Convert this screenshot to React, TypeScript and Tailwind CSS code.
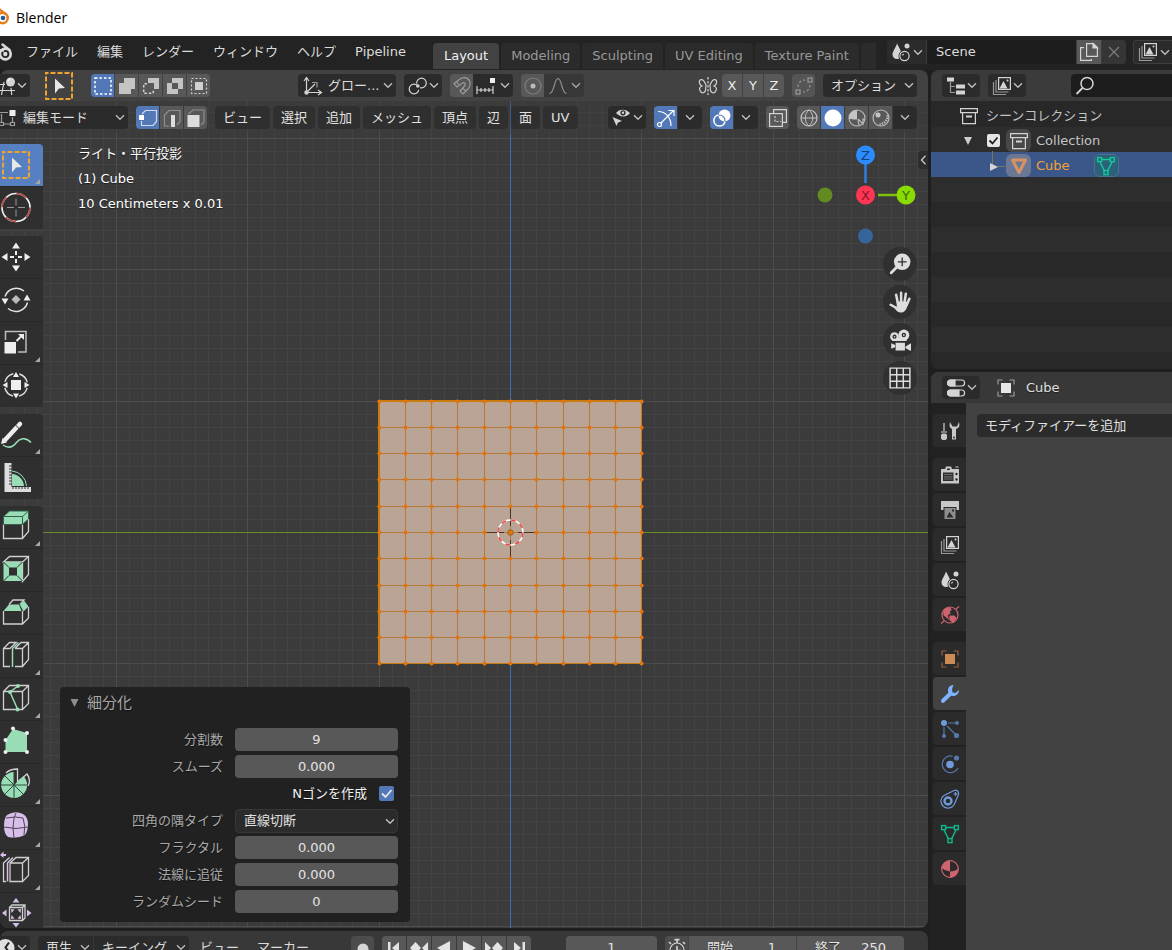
import React from "react";

type Kids = { children?: React.ReactNode };

const G = "#d4d4d4";
const GREEN = "#98ddb5";
const PURPLE = "#d6bfe8";

const DARK = "flex h-[23px] shrink-0 items-center rounded bg-[#2b2b2b] text-[#dcdcdc]";
const TOGGLE = "flex h-[23px] w-[23px] shrink-0 items-center justify-center bg-[#585858]";
const TOGGLE_ON = "flex h-[23px] w-[23px] shrink-0 items-center justify-center bg-[#5278b8]";

function Ico({ children, size = 20, color = G }: Kids & { size?: number; color?: string }) {
  return (
    <svg
      aria-hidden="true"
      className="shrink-0"
      width={size}
      height={size}
      viewBox="0 0 20 20"
      fill="none"
      stroke={color}
      strokeWidth="1.2"
      style={{ color }}
    >
      {children}
    </svg>
  );
}

function Chevron() {
  return (
    <svg aria-hidden="true" className="pointer-events-none shrink-0" width="10" height="7" viewBox="0 0 10 7" fill="none" stroke="#bdbdbd" strokeWidth="1.4">
      <path d="M1 1.2 5 5.2 9 1.2" />
    </svg>
  );
}

function IconMenu({ label, children }: Kids & { label: string }) {
  return (
    <button
      aria-label={label}
      className="flex h-[23px] w-[38px] shrink-0 items-center justify-between rounded bg-[#2b2b2b] pr-[3px] pl-1"
    >
      {children}
      <Chevron />
    </button>
  );
}

/* ---------- header icons ---------- */

const ScenesIcon = () => (
  <Ico>
    <path d="M6 1.500C8 5.500 10.500 9 10.500 12.500a4.500 4.500 0 0 1-9 0C1.500 9.500 4.500 6 6 1.500z" fill={G} stroke="none" />
    <circle cx="13.500" cy="14" r="6" fill="#2b2b2b" stroke="none" />
    <circle cx="13.500" cy="14" r="4.600" />
    <path d="M11.500 13.500a2 2 0 0 1 1.500-1.500" />
    <circle cx="16" cy="4" r="2.500" fill={G} stroke="none" />
  </Ico>
);
const LayersIcon = () => (
  <Ico>
    <path d="M1.500 6v12.500H14M4 4v12h12.500" stroke="#999" />
    <rect x="6.600" y="1.600" width="11.800" height="11.800" />
    <path d="M7.500 12.500 11.500 5l4 7.500z" fill={G} stroke="none" />
    <circle cx="15.500" cy="4.600" r="1" fill={G} stroke="none" />
  </Ico>
);
const CollectionIcon = () => (
  <Ico>
    <path d="M1.600 2.600h16.800v4H1.600zM3.600 6.600v11h12.800v-11" />
    <path d="M7 10.500h6" strokeWidth="2" />
  </Ico>
);
const ObjectIcon = ({ c = "#e6e6e6", d = "#9a9a9a" }: { c?: string; d?: string }) => (
  <Ico>
    <path d="M2 6.500V2h4.500M13.500 2H18v4.500M18 13.500V18h-4.500M6.500 18H2v-4.500" stroke={d} />
    <rect x="5" y="5" width="10" height="10" fill={c} stroke="none" />
  </Ico>
);
const MeshIcon = ({ c = "#10b88c" }: { c?: string }) => (
  <Ico color={c}>
    <path d="M5 3.500h10M4 6l4.500 9M16 6l-4.500 9" strokeWidth="1.500" />
    <rect x="1.600" y="1.600" width="4" height="4" strokeWidth="1.400" />
    <rect x="14.400" y="1.600" width="4" height="4" strokeWidth="1.400" />
    <rect x="8" y="14.600" width="4" height="4" strokeWidth="1.400" />
  </Ico>
);

const BoxSelectGlyph = ({ size }: { size: number }) => (
  <svg aria-hidden="true" width={size} height={size} viewBox="0 0 32 32" fill="none" className="shrink-0">
    <rect x="3" y="3" width="26" height="26" stroke="#f0a332" strokeWidth="2" strokeDasharray="5 2" strokeDashoffset="2.500" />
    <path d="M12 8.500 22 18l-6 .5-4 5z" fill="#e8e8e8" />
  </svg>
);

/* ---------- window chrome ---------- */

function TitleBar() {
  return (
    <header className="flex h-9 shrink-0 items-center bg-white">
      <svg aria-hidden="true" className="mr-[7px]" width="9" height="20" viewBox="0 0 9 20" fill="none">
        <circle cx="2.500" cy="10" r="5.200" fill="#fff" stroke="#e8801a" strokeWidth="2.600" />
        <path d="M-1 1 6 6.500" stroke="#e8801a" strokeWidth="2.400" />
        <circle cx="3" cy="10" r="2.300" fill="#235b9c" />
      </svg>
      <h1 className="font-['Open_Sans','Noto_Sans',sans-serif] text-[14px] text-black">Blender</h1>
    </header>
  );
}

function TopBar() {
  const menus = ["ファイル", "編集", "レンダー", "ウィンドウ", "ヘルプ", "Pipeline"];
  const tabs = ["Modeling", "Sculpting", "UV Editing", "Texture Paint"];
  return (
    <div className="flex h-[34px] shrink-0 bg-[#232323]">
      <div className="flex h-8 shrink-0 items-center">
        <svg aria-label="Blender" className="mr-[13px]" width="13" height="20" viewBox="0 0 13 20" fill="none">
          <circle cx="5.300" cy="12" r="5.400" stroke="#dcdcdc" strokeWidth="2.700" />
          <circle cx="5.300" cy="12" r="2.200" fill="#dcdcdc" />
          <path d="M-2 8.500h5M2.500 2.500 9.500 8" stroke="#dcdcdc" strokeWidth="2.400" strokeLinecap="round" />
        </svg>
        <nav className="flex items-center gap-[19px]">
          {menus.map((m) => (
            <button key={m} className="text-[#dcdcdc]">{m}</button>
          ))}
        </nav>
      </div>
      <div role="tablist" className="ml-[27px] flex min-w-0 flex-1 items-end gap-[2px] overflow-hidden pb-[1px]">
        <button role="tab" aria-selected="true" className="h-[26px] shrink-0 rounded-t bg-[#424242] px-[11px] text-[#f0f0f0]">Layout</button>
        {tabs.map((t) => (
          <button role="tab" key={t} aria-selected="false" className="h-[26px] shrink-0 rounded-t bg-[#2b2b2b] px-[10px] text-[#989898]">{t}</button>
        ))}
        <span className="h-[26px] min-w-2 flex-1 rounded-tl bg-[#2b2b2b]" />
      </div>
      <div className="ml-[11px] flex h-8 shrink-0 items-center gap-[7px]">
        <div className="flex h-[24px] gap-px overflow-hidden rounded bg-[#3d3d3d]">
          <button aria-label="シーンを参照" className="flex w-[39px] items-center justify-between bg-[#2b2b2b] pr-[3px] pl-1">
            <ScenesIcon />
            <Chevron />
          </button>
          <input aria-label="シーン名" defaultValue="Scene" className="w-[149px] bg-[#1d1d1d] px-[9px] text-[#dcdcdc] outline-none" />
          <button aria-label="新規シーン" className="flex w-6 items-center justify-center bg-[#585858]">
            <Ico>
              <path d="M7.600 1.600h6.800l4 4v8.800H7.600z" />
              <path d="M14 1.600v4.400h4.400z" fill={G} />
              <path d="M5 5.600H1.600v12.800h10.800V17" />
            </Ico>
          </button>
          <button aria-label="シーンを削除" className="flex w-6 items-center justify-center bg-[#353535]">
            <Ico color="#7c7c7c"><path d="M5 5l10 10M15 5 5 15" /></Ico>
          </button>
        </div>
        <button aria-label="ビューレイヤー" className="flex h-[24px] w-[39px] items-center justify-between rounded-l border border-r-0 border-[#3d3d3d] bg-[#2b2b2b] pr-[2px] pl-1">
          <LayersIcon />
          <Chevron />
        </button>
      </div>
    </div>
  );
}

function ToolSettings() {
  return (
    <div className="flex h-[31px] shrink-0 items-center rounded-t-lg bg-[#424242] pr-[11px]">
      <button aria-label="ツール設定" className="flex h-[23px] w-[30px] shrink-0 items-center justify-between rounded-r bg-[#2b2b2b] pr-[3px]">
        <svg aria-hidden="true" width="16" height="20" viewBox="0 0 16 20" fill="none" stroke={G} strokeWidth="1.200">
          <path d="M0 8.500h5M0 14.500h15M4 6 1.500 19M11 12l.8 7" />
          <circle cx="10.500" cy="6" r="4.500" fill={G} stroke="none" />
          <path d="M8 5a3 3 0 0 1 2-2" stroke="#fff" />
        </svg>
        <Chevron />
      </button>
      <button aria-label="ボックス選択" className="ml-[13px] shrink-0"><BoxSelectGlyph size={32} /></button>
      <div className="ml-[16px] flex shrink-0 gap-px overflow-hidden rounded">
        <button aria-label="新規選択" className={TOGGLE_ON}>
          <Ico color="#fff"><rect x="2" y="2" width="16" height="16" strokeDasharray="2.500 2" strokeWidth="1.500" /></Ico>
        </button>
        <button aria-label="選択に追加" className={TOGGLE}>
          <Ico><path d="M7 2h11v11h-4v5H2V7h5z" fill="#c4c4c4" stroke="none" /></Ico>
        </button>
        <button aria-label="選択から除外" className={TOGGLE}>
          <Ico>
            <path d="M7 2h11v11h-5V7H7z" fill="#c4c4c4" stroke="none" />
            <path d="M6 7.700H2.700v9.600h9.600V14" strokeDasharray="2.500 2" strokeWidth="1.500" />
          </Ico>
        </button>
        <button aria-label="選択を反転" className={TOGGLE}>
          <Ico><path fillRule="evenodd" d="M7 2h11v11h-5v5H2V7h5zM7 7v6h6V7z" fill="#c4c4c4" stroke="none" /></Ico>
        </button>
        <button aria-label="交差選択" className={TOGGLE}>
          <Ico>
            <rect x="6" y="6" width="8" height="8" fill="#d0d0d0" stroke="none" />
            <rect x="2.500" y="2.500" width="15" height="15" strokeDasharray="2 2" />
          </Ico>
        </button>
      </div>

      <div className="relative ml-[88px] shrink-0">
        <span className="pointer-events-none absolute top-[2px] left-[5px]">
          <Ico>
            <path d="M3.500 2v14.500H18" />
            <path d="M1 5 3.500 1.500 6 5M15 14l3.500 2.500L15 19M4 16 12 8" />
            <path d="M9 6.500h5v5" stroke="#999" />
            <circle cx="3.500" cy="16.500" r="1.600" fill={G} />
          </Ico>
        </span>
        <select aria-label="トランスフォーム座標系" className="h-[23px] w-[98px] appearance-none rounded bg-[#2b2b2b] pl-[30px] text-[#dcdcdc] outline-none">
          <option>グロー...</option>
        </select>
        <span className="pointer-events-none absolute top-[8px] right-[3px]"><Chevron /></span>
      </div>
      <div className="ml-2">
        <IconMenu label="ピボットポイント">
          <Ico>
            <circle cx="6" cy="13" r="4.800" strokeDasharray="25 5.200" strokeDashoffset="-1" />
            <circle cx="13.500" cy="7" r="4.800" strokeDasharray="25 5.200" strokeDashoffset="-14" />
            <circle cx="9.800" cy="10" r="1.800" fill={G} stroke="none" />
          </Ico>
        </IconMenu>
      </div>
      <div className="ml-2 flex shrink-0 overflow-hidden rounded">
        <button aria-label="スナップ" className={TOGGLE}>
          <Ico color="#9b9b9b">
            <path d="M2 7.500 8 3c4-3 9-1 10 3s-1 6-3 8l-4 4-3-3 4.500-5c2-2 0-4-2-3L5 11z" />
            <path d="M4.500 5.500 7 9M13.500 15l-3-3" />
          </Ico>
        </button>
        <button aria-label="スナップ先" className="flex h-[23px] w-[40px] items-center justify-between bg-[#2b2b2b] pr-[3px] pl-[3px]">
          <Ico>
            <path d="M1 10v8M1 14h16M17 10v8M5 12v4M9 12v4M13 12v4" />
            <rect x="14" y="2" width="5" height="5" fill="#eee" stroke="none" />
          </Ico>
          <Chevron />
        </button>
      </div>
      <div className="ml-2 flex shrink-0 overflow-hidden rounded">
        <button aria-label="プロポーショナル編集" className={TOGGLE}>
          <Ico color="#7e7e7e">
            <circle cx="10" cy="10" r="8" />
            <circle cx="10" cy="10" r="2.500" fill="#bbb" stroke="none" />
          </Ico>
        </button>
        <button aria-label="減衰タイプ" className="flex h-[23px] w-[40px] items-center justify-between bg-[#353535] pr-[3px] pl-[4px] opacity-80">
          <Ico color="#a8a8a8"><path d="M1.500 17.500c5 0 4.500-15 8.500-15s3.500 15 8.500 15" /></Ico>
          <Chevron />
        </button>
      </div>

      <div className="flex-1" />
      <Ico>
        <path d="M10 1v18" strokeDasharray="2.500 1.500" />
        <path d="M8 9 6.500 6C5 3 2 3 1.500 5S2 9 4 10c-3 1-3 4-1 6s4 0 4.500-1.500zM12 9l1.500-3c1.500-3 4.500-3 5-1s-.5 4-2.500 5c3 1 3 4 1 6s-4 0-4.500-1.500z" />
      </Ico>
      <div className="ml-[4px] flex shrink-0 gap-px overflow-hidden rounded">
        {["X", "Y", "Z"].map((a) => (
          <button key={a} className="h-[23px] w-5 bg-[#585858] text-center text-[#ececec]">{a}</button>
        ))}
      </div>
      <button aria-label="自動マージ" className="ml-2 flex h-[23px] w-[23px] shrink-0 items-center justify-center rounded bg-[#555]">
        <Ico color="#9a9a9a">
          <rect x="2" y="14" width="4" height="4" />
          <rect x="14" y="2" width="4" height="4" />
          <path d="M4 11c0-4 3-7 7-7M16 9c0 4-3 7-7 7" strokeDasharray="2.500 2" />
        </Ico>
      </button>
      <button className="ml-2 flex h-[23px] w-[94px] shrink-0 items-center justify-between rounded bg-[#2b2b2b] pr-[3px] pl-2 text-[#dcdcdc]">
        オプション
        <Chevron />
      </button>
    </div>
  );
}

function ViewHeader() {
  const menus = ["ビュー", "選択", "追加", "メッシュ", "頂点", "辺", "面", "UV"];
  return (
    <div className="relative flex h-[33px] shrink-0 items-center bg-[#3d3d3d]/40 pr-[11px]">
      <div className="relative shrink-0">
        <svg aria-hidden="true" className="pointer-events-none absolute top-[3px] left-0" width="17" height="18" viewBox="0 0 17 18" fill="none" stroke="#9d9d9d" strokeWidth="1.200">
          <path d="M0 3.500h8M1.500 5v8M4 15h6M12.500 8v5" />
          <path d="M-.5 13.500h4v3h-4zM10.500 13.500h4v3h-4z" />
          <rect x="9.500" y="1" width="6" height="6" fill="#eee" stroke="none" />
        </svg>
        <select aria-label="モード" className="h-[23px] w-[128px] appearance-none rounded-r bg-[#2b2b2b] pl-[23px] text-[#dcdcdc] outline-none">
          <option>編集モード</option>
        </select>
        <span className="pointer-events-none absolute top-[8px] right-[3px]"><Chevron /></span>
      </div>
      <div className="ml-2 flex shrink-0 gap-px overflow-hidden rounded">
        <button aria-label="頂点選択" className={TOGGLE_ON}>
          <Ico color="#fff">
            <path d="M4 6 7.500 2.500h11v11L15 17.500H3.500V13" stroke="#cfdaf0" />
            <rect x="1" y="7" width="5" height="5" fill="#fff" stroke="none" />
          </Ico>
        </button>
        <button aria-label="辺選択" className={TOGGLE}>
          <Ico color="#8f8f8f">
            <path d="M7 18H2.500V7L7 2.500h11v11L15 17" />
            <rect x="9" y="7" width="4" height="12" fill="#ddd" stroke="none" />
          </Ico>
        </button>
        <button aria-label="面選択" className={TOGGLE}>
          <Ico color="#8f8f8f">
            <path d="M2.500 6 7 2h11v12l-3 3" />
            <rect x="1.500" y="7" width="12" height="12" fill="#ddd" stroke="none" />
          </Ico>
        </button>
      </div>
      <nav className="ml-2 flex shrink-0 gap-[3px]">
        {menus.map((m) => (
          <button key={m} className="h-[23px] rounded bg-[#2f2f2f]/90 px-2 text-[#e2e2e2]">{m}</button>
        ))}
      </nav>
      <div className="flex-1" />
      <div className="flex shrink-0 items-center gap-2">
        <IconMenu label="表示の種類">
          <Ico>
            <path d="M4 5c3-4.500 10-4.500 14 0-3 4.500-10 4.500-14 0z" fill={G} stroke="none" />
            <circle cx="11" cy="4.800" r="2.600" fill="#2b2b2b" stroke="none" />
            <circle cx="11" cy="4.800" r="1.200" fill={G} stroke="none" />
            <path d="M.5 9 10 13l-4 1.500L4.500 18z" fill={G} stroke="none" />
          </Ico>
        </IconMenu>
        <div className="flex gap-px overflow-hidden rounded">
          <button aria-label="ギズモ" className={TOGGLE_ON}>
            <Ico color="#fff">
              <path d="M2 3.500c8 0 13 6 13 14.500M4.500 15.500 17.500 2.500M12.500 2.500h5.500v5.500" />
              <circle cx="3.500" cy="16.500" r="2" />
            </Ico>
          </button>
          <button aria-label="ギズモ設定" className={DARK + " w-6 justify-center rounded-l-none"}><Chevron /></button>
        </div>
        <div className="flex gap-px overflow-hidden rounded">
          <button aria-label="オーバーレイ" className={TOGGLE_ON}>
            <Ico color="#fff">
              <circle cx="12.500" cy="7.500" r="6" fill="#fff" stroke="none" />
              <circle cx="7.500" cy="12.500" r="5.500" stroke="#5278b8" />
              <path d="M6.500 7a5.600 5.600 0 1 0 6.500 6.500" strokeWidth="1.500" />
            </Ico>
          </button>
          <button aria-label="オーバーレイ設定" className={DARK + " w-6 justify-center rounded-l-none"}><Chevron /></button>
        </div>
        <button aria-label="透過表示" className="flex h-[23px] w-[23px] items-center justify-center rounded bg-[#585858]">
          <Ico>
            <rect x="1.600" y="5.600" width="12.800" height="12.800" />
            <path d="M5.600 5V1.600h12.800v12.800H15" />
            <path d="M7 8v5.500h6" strokeDasharray="2 1.500" />
          </Ico>
        </button>
        <div className="flex gap-px overflow-hidden rounded">
          <button aria-label="ワイヤーフレーム" className={TOGGLE}>
            <Ico color="#c4c4c4">
              <circle cx="10" cy="10" r="8" />
              <path d="M2 10h16M10 2c-5 4-5 12 0 16M10 2c5 4 5 12 0 16" strokeWidth="1" />
            </Ico>
          </button>
          <button aria-label="ソリッド" className={TOGGLE_ON}>
            <Ico><circle cx="10" cy="10" r="8.500" fill="#fff" stroke="none" /></Ico>
          </button>
          <button aria-label="マテリアルプレビュー" className={TOGGLE}>
            <Ico color="#b8b8b8">
              <circle cx="10" cy="10" r="8" />
              <path d="M10 10.500V2a8 8 0 0 0-7.800 8.500zM10 2a8 8 0 0 0-8 8c0 1 3 1.500 8 1.500z" fill="#c4c4c4" stroke="none" />
              <path d="M11 11l5 5v-5l1.500 1M11 11.500l1 6" />
            </Ico>
          </button>
          <button aria-label="レンダー表示" className={TOGGLE}>
            <Ico color="#b8b8b8">
              <circle cx="10" cy="10" r="8" />
              <circle cx="7" cy="7" r="2.500" fill="#c4c4c4" stroke="none" />
              <path d="M16.500 7c1 4-3 9-8 9.500" strokeWidth="2.400" strokeDasharray="1.500 1" />
            </Ico>
          </button>
          <button aria-label="シェーディング設定" className={DARK + " w-6 justify-center rounded-l-none"}><Chevron /></button>
        </div>
      </div>
    </div>
  );
}

/* ---------- viewport drawing ---------- */

function Scene() {
  const cell = 13.13;
  const lines = Array.from({ length: 161 }, (_, i) => i - 80);
  const ticks = Array.from({ length: 11 }, (_, i) => Math.round((i - 5) * cell * 2));
  const edge = ticks[10];
  return (
    <svg aria-label="3Dビュー" className="absolute inset-0 size-full" shapeRendering="crispEdges">
      <g transform="translate(510.5 431.5)" fill="none">
        {[false, true].map((major) =>
          lines
            .filter((i) => (i % 10 === 0) === major)
            .map((i) => {
              const p = Math.round(i * cell);
              return <path key={i} d={`M${p} -1100V1100M-1100 ${p}H1100`} stroke={major ? "#4d4d4d" : "#434343"} />;
            })
        )}
        <path d="M-1100 0H1500" stroke="#658f28" />
        <path d="M0 -1100V1100" stroke="#3c70ac" />
        <rect x={-edge} y={-edge} width={edge * 2} height={edge * 2} fill="#b9a495" />
        {ticks.map((t) => (
          <path key={t} d={`M${t} ${-edge}V${edge}M${-edge} ${t}H${edge}`} stroke="#b57a3e" />
        ))}
        <rect x={-edge} y={-edge} width={edge * 2} height={edge * 2} stroke="#c97a14" />
        <path d={`M${-edge - 0.5} ${edge}V${-edge - 0.5}H${edge}`} stroke="#cc790e" strokeWidth="2" />
        <path d="M-25 0h18M7 0h19M0 -25v18M0 7v19" stroke="#4a3420" />
        <g shapeRendering="auto">
          {ticks.map((x) => ticks.map((y) => <circle key={`${x},${y}`} cx={x} cy={y} r="2.100" fill="#e4740e" />))}
          <circle r="12.500" stroke="#fff" strokeWidth="1.500" />
          <circle r="12.500" stroke="#f04444" strokeWidth="1.500" strokeDasharray="4.900 4.900" />
          <circle r="2.800" fill="#d9780f" stroke="#8f5a20" strokeWidth=".8" />
        </g>
      </g>
    </svg>
  );
}

function AxisGizmo() {
  return (
    <svg aria-label="ナビゲーション軸" width="100" height="104" viewBox="0 0 100 104" className="shrink-0" fontSize="13" textAnchor="middle">
      <path d="M49.500 19v20" stroke="#2e7fe0" strokeWidth="2.500" />
      <path d="M62 51h20" stroke="#7ec30a" strokeWidth="2.500" />
      <circle cx="9" cy="51" r="7.500" fill="#628b20" />
      <circle cx="49.500" cy="92" r="7.500" fill="#35659b" />
      <circle cx="49.500" cy="11" r="9.500" fill="#2b8cff" />
      <circle cx="49.500" cy="51" r="9.500" fill="#ff3653" />
      <circle cx="90" cy="51" r="9.500" fill="#8adb00" />
      <g className="[text-shadow:none]">
        <text x="49.500" y="16" fill="#173f73">Z</text>
        <text x="49.500" y="56" fill="#8a1527">X</text>
        <text x="90" y="56" fill="#3f6303">Y</text>
      </g>
    </svg>
  );
}

function NavButtons() {
  const cls = "flex size-[34px] items-center justify-center rounded-full bg-[#303030]";
  return (
    <div className="flex flex-col gap-1">
      <button aria-label="ズーム" className={cls}>
        <Ico size={22}>
          <circle cx="12" cy="8" r="7.500" fill="#dedede" stroke="none" />
          <path d="M7 13 2 18" stroke="#dedede" strokeWidth="2.600" strokeLinecap="round" />
          <path d="M12 4v8M8 8h8" stroke="#303030" />
        </Ico>
      </button>
      <button aria-label="視点を移動" className={cls}>
        <Ico size={22} color="#dedede">
          <path d="M6.500 3.500 8 11M11 1.500V10M15.300 2.500 14 11M18.500 7 16 13M1.500 12.500 6 15" strokeWidth="2.300" strokeLinecap="round" />
          <path d="M7 9.500h9l1 2c-.5 5-3 8-6 8s-5-2-7-5.500l3 .5z" fill="#dedede" stroke="none" />
        </Ico>
      </button>
      <button aria-label="カメラビュー" className={cls}>
        <Ico size={22} color="#dedede">
          <circle cx="13.500" cy="5.500" r="5" fill="#dedede" stroke="none" />
          <circle cx="5" cy="7" r="4" fill="#dedede" stroke="none" />
          <path d="M2 8h14v3H3z" fill="#dedede" stroke="none" />
          <circle cx="13.500" cy="5.500" r="1.400" stroke="#303030" />
          <circle cx="5" cy="7" r="1.300" stroke="#303030" />
          <path d="M6 12.500h8.500v7H6zM15 16l5-3v7l-5-2.500zM2 13l3.500 1.500v2L2 18z" fill="#dedede" stroke="none" />
        </Ico>
      </button>
      <button aria-label="透視投影" className={cls}>
        <Ico size={22} color="#dedede">
          <path d="M1 1h18v18H1zM7 1v18M13 1v18M1 7h18M1 13h18" strokeWidth="1.300" />
        </Ico>
      </button>
    </div>
  );
}

/* ---------- toolbar ---------- */

const W = "#d0d0d0";

type Tool = { name: string; more?: boolean; art: React.ReactNode };

const toolGroups: Tool[][] = [
  [
    { name: "ボックス選択", more: true, art: null },
    {
      name: "カーソル",
      art: (
        <>
          <circle cx="16" cy="15.500" r="14" stroke="#eee" strokeWidth="1.700" />
          <circle cx="16" cy="15.500" r="14" stroke="#b04a4a" strokeWidth="1.700" strokeDasharray="11 11" />
          <path d="M7 15.500h7M18 15.500h7M16 6.500v7M16 17.500v7" stroke="#999" />
        </>
      ),
    },
  ],
  [
    {
      name: "移動",
      art: (
        <>
          <path d="M16 1.500 20 7.500h-8zM16 30.500 20 24.500h-8zM1.500 16 7.500 12v8zM30.500 16 24.500 12v8z" fill="#eee" />
          <path d="M10 16h4M18 16h4M16 10v4M16 18v4" stroke="#eee" strokeWidth="2" />
        </>
      ),
    },
    {
      name: "回転",
      art: (
        <>
          <path d="M5 12.500A12 12 0 0 1 24 7M27.500 18.500A12 12 0 0 1 8 24.500" stroke="#e4e4e4" strokeWidth="1.500" />
          <path d="M1.500 14.500h7L5 20.500zM23.500 16.500h7L27 10.500z" fill="#eee" />
          <path d="M16 11 20.500 15.500 16 20 11.500 15.500z" fill="#bbb" />
        </>
      ),
    },
    {
      name: "スケール",
      more: true,
      art: (
        <>
          <path d="M5.500 13V4.500h20.500V25H18" stroke="#bdbdbd" strokeWidth="1.500" />
          <path d="M4.500 15h11.500v11.500H4.500z" fill="#eee" />
          <path d="M16.500 14 21 9.500" stroke="#eee" strokeWidth="2" />
          <path d="M18 7h6v6z" fill="#eee" />
        </>
      ),
    },
    {
      name: "トランスフォーム",
      art: (
        <>
          <circle cx="16" cy="15" r="11.500" stroke="#ddd" strokeWidth="1.500" strokeDasharray="12 6.060" strokeDashoffset="-3" />
          <path d="M16 2 19 7h-6zM16 28.500 19 23.500h-6zM2.500 15 7.500 12v6zM29.500 15 24.500 12v6zM11 10h10v10H11z" fill="#eee" />
        </>
      ),
    },
  ],
  [
    {
      name: "アノテート",
      more: true,
      art: (
        <>
          <path d="M4.500 21.500 18 7" stroke="#eee" strokeWidth="4.500" />
          <path d="M18.500 6.500 20 5" stroke="#eee" strokeWidth="4.500" strokeLinecap="round" />
          <path d="M1 25 2.500 19l4.500 4.500z" fill="#eee" />
          <path d="M15.500 6 19.500 10" stroke="#2f2f2f" />
          <path d="M3 26c6 4 10 2 13-2s9-7 15-.5" stroke={GREEN} strokeWidth="1.500" />
        </>
      ),
    },
    {
      name: "メジャー",
      art: (
        <>
          <path d="M12 24V12a13 13 0 0 1 12 12z" fill={GREEN} />
          <path d="M12 9a16 16 0 0 1 14.500 15" stroke={GREEN} />
          <path d="M4.500 1h7v29h-7zM4.500 25H31v5H4.500z" fill="#ddd" />
          <path d="M9 4h3M9 7h3M9 10h3M9 13h3M9 16h3M9 19h3M9 22h3M13 25v2M16 25v2M19 25v2M22 25v2M25 25v2M28 25v2" stroke="#333" />
        </>
      ),
    },
  ],
  [
    {
      name: "押し出し",
      more: true,
      art: (
        <>
          <path d="M3.500 13v14.500h19V13M22.500 27.500l6-7V8" stroke={W} strokeWidth="1.300" />
          <path d="M3.500 5.500 9.500 0h19v8l-6 5.500h-19z" fill={GREEN} stroke="#33604a" />
          <path d="M3.500 5.500h19v8M22.500 5.500l6-5.500" stroke="#33604a" />
        </>
      ),
    },
    {
      name: "面を差し込む",
      art: (
        <>
          <path d="M3.500 8 9.500 2.500h19v18l-6 7V8z" stroke={W} strokeWidth="1.300" />
          <path d="M22.500 8l6-5.500" stroke={W} strokeWidth="1.300" />
          <path d="M3.500 8h19v19h-19z" fill={GREEN} />
          <path d="M3.500 8 9 13.500M22.500 8 17 13.500M3.500 27 9 21.500M22.500 27 17 21.500" stroke="#2f2f2f" />
          <path d="M9 13.500h8v8H9z" fill="#2f2f2f" />
        </>
      ),
    },
    {
      name: "ベベル",
      art: (
        <>
          <path d="M3.500 14v13h19V14M22.500 27l6-6V10M9 7.500l4-4.500h11L20 7.500" stroke={W} strokeWidth="1.300" />
          <path d="M3.500 14 9 7.500h10l2.500 6.500z" fill={GREEN} />
          <path d="M20 8l4-4.500 4.500 6-5 5z" fill={GREEN} />
        </>
      ),
    },
    {
      name: "ループカット",
      more: true,
      art: (
        <>
          <path d="M10 8.500H3.500v18H10M15 8.500h7.500v18H15M22.500 26.500l6-7V2.500H21l-6 6M3.500 8.500l6-6H16l-6 6M22.500 8.500l6-6" stroke={W} strokeWidth="1.300" />
          <path d="M12.500 27V8.500l6-6" stroke={GREEN} strokeWidth="1.500" />
        </>
      ),
    },
    {
      name: "ナイフ",
      more: true,
      art: (
        <>
          <path d="M3.500 8.500h19v18h-19zM3.500 8.500l6-6h19v18l-6 6M22.500 8.500l6-6" stroke={W} strokeWidth="1.300" />
          <path d="M18 3 10 9l7.500 17" stroke={GREEN} strokeWidth="1.500" />
          <path d="M18 1a2 2 0 1 1 0 4 2 2 0 0 1 0-4zM10 7a2 2 0 1 1 0 4 2 2 0 0 1 0-4zM17.500 24.500a2 2 0 1 1 0 4 2 2 0 0 1 0-4z" fill={GREEN} />
        </>
      ),
    },
    {
      name: "ポリビルド",
      art: (
        <>
          <path d="M13 3 27 7v19H5.500V14z" fill={GREEN} />
          {[[13, 2.5], [27, 7], [5.5, 14], [5.5, 26], [27, 26]].map(([x, y]) => (
            <circle key={`${x}-${y}`} cx={x} cy={y} r="2" fill="#eee" />
          ))}
        </>
      ),
    },
    {
      name: "スピン",
      more: true,
      art: (
        <>
          <path d="M6 4c3-3 7-4 11.500-4v13L27 5c3 4 3 9 1 12" stroke={W} strokeWidth="1.300" />
          <path d="M14 16V3a13 13 0 1 0 9.500 4z" fill={GREEN} />
          <path d="M1 16h26M14 3v26M5 7l18 18M5 25l9.500-9.500" stroke="#2f4a3b" />
        </>
      ),
    },
    {
      name: "スムーズ",
      more: true,
      art: (
        <>
          <path d="M7 3q8-5 16-1 5 3 5 10t-3 11q-8 4-17 2-4-3-4-11T7 3z" fill={PURPLE} />
          <path d="M4 15q12 3 24 0M14 26q-2-10 0-20M6 6q10-2 17 0M14 6l2-5M23 6q3 8 1 17" stroke="#4e4458" />
        </>
      ),
    },
    {
      name: "辺スライド",
      more: true,
      art: (
        <>
          <path d="M6 26.500H3.500V8l6-5.500M10 8h12.500v18.500H10zM10 8l6-5.500h12.500v18l-6 6M22.500 8l6-5.500" stroke={W} strokeWidth="1.300" />
          <path d="M7.500 26.500V8L13 2.500" stroke={PURPLE} strokeWidth="1.500" />
          <path d="M6-1H3.500V-3.500L0 0 3.500 3V1H6z" fill={PURPLE} />
        </>
      ),
    },
    {
      name: "収縮/膨張",
      more: true,
      art: (
        <>
          <path d="M9.500 9.500h13v13h-13zM9.500 9.500 12 7h13v13l-2.500 2.500M22.500 9.500 25 7" stroke={W} strokeWidth="1.300" />
          <path d="M11 11l3.500.5L11.500 15zM21 11l-3.500.5L20.500 15zM11 21l3.500-.5L11.500 17zM21 21l-3.500-.5L20.500 17zM16 0l3.500 4.500h-7zM16 29.500l3.500-4.500h-7zM2 15l4.500-3.500v7zM31.500 15 27 11.500v7z" fill={PURPLE} />
        </>
      ),
    },
  ],
];

function Toolbar() {
  return (
    <div className="mt-[10px] flex w-[43px] shrink-0 flex-col gap-[7px] overflow-hidden">
      {toolGroups.map((group, g) => (
        <div key={g} className="flex shrink-0 flex-col gap-px overflow-hidden rounded-r bg-[#282828]">
          {group.map((t) => (
            <button
              key={t.name}
              aria-label={t.name}
              className={"relative flex h-[42px] items-center " + (t.art ? "bg-[#2f2f2f]" : "bg-[#5680c2]")}
            >
              {t.art ? (
                <svg aria-hidden="true" width="32" height="32" viewBox="0 0 32 32" fill="none" overflow="visible">{t.art}</svg>
              ) : (
                <BoxSelectGlyph size={32} />
              )}
              {t.more && (
                <svg aria-hidden="true" className="absolute right-[3px] bottom-[2px]" width="5" height="5" viewBox="0 0 5 5">
                  <path d="M5 0v5H0z" fill="#a8a8a8" />
                </svg>
              )}
            </button>
          ))}
        </div>
      ))}
    </div>
  );
}

/* ---------- operator panel ---------- */

function NumberRow({ label, id, value }: { label: string; id: string; value: string }) {
  return (
    <div className="flex h-[23px] items-center gap-3">
      <label htmlFor={id} className="flex-1 text-right text-[#a9a9a9]">{label}</label>
      <input id={id} defaultValue={value} className="h-[23px] w-[163px] rounded bg-[#585858] text-center text-[#e4e4e4] outline-none" />
    </div>
  );
}

function OperatorPanel() {
  return (
    <section className="absolute bottom-[6px] left-[60px] w-[350px] rounded bg-[#212121] pr-3 pb-[9px] pl-[10px]">
      <h2 className="flex h-8 items-center gap-2 text-[15px] text-[#a9a9a9]">
        <svg aria-hidden="true" width="9" height="8" viewBox="0 0 9 8"><path d="M.5 0h8L4.500 8z" fill="#8d8d8d" /></svg>
        細分化
      </h2>
      <div className="mt-[9px] flex flex-col gap-1">
        <NumberRow id="cuts" label="分割数" value="9" />
        <NumberRow id="smooth" label="スムーズ" value="0.000" />
        <div className="flex h-[23px] items-center justify-end gap-3 pr-1">
          <label htmlFor="ngon" className="text-[#f2f2f2]">Nゴンを作成</label>
          <span className="relative flex size-[15px]">
            <input id="ngon" type="checkbox" defaultChecked className="size-[15px] appearance-none rounded-xs bg-[#5278b8]" />
            <svg aria-hidden="true" className="pointer-events-none absolute inset-0" width="15" height="15" viewBox="0 0 15 15" fill="none">
              <path d="M3 7.500 6.500 11 12.500 4" stroke="#e8e8e8" strokeWidth="1.800" />
            </svg>
          </span>
        </div>
        <div className="flex h-[23px] items-center gap-3">
          <label htmlFor="corner" className="flex-1 text-right text-[#a9a9a9]">四角の隅タイプ</label>
          <span className="relative flex">
            <select id="corner" className="h-[24px] w-[163px] appearance-none rounded border border-[#383838] bg-[#2b2b2b] pl-2 text-[#e0e0e0] outline-none">
              <option>直線切断</option>
            </select>
            <span className="pointer-events-none absolute top-[9px] right-[3px]"><Chevron /></span>
          </span>
        </div>
        <NumberRow id="fractal" label="フラクタル" value="0.000" />
        <NumberRow id="along" label="法線に追従" value="0.000" />
        <NumberRow id="seed" label="ランダムシード" value="0" />
      </div>
    </section>
  );
}

function Viewport() {
  return (
    <main className="relative flex min-h-0 flex-1 flex-col overflow-hidden rounded-b-lg bg-[#3b3b3b]">
      <Scene />
      <ViewHeader />
      <div className="relative flex min-h-0 flex-1">
        <Toolbar />
        <div className="mt-[7px] ml-[35px] leading-[25px] text-white">
          <p>ライト・平行投影</p>
          <p>(1) Cube</p>
          <p>10 Centimeters x 0.01</p>
        </div>
        <div className="mt-[10px] ml-auto flex flex-col items-end">
          <div className="flex">
            <AxisGizmo />
            <button aria-label="サイドバーを開く" className="mt-[7px] ml-[2px] flex h-[18px] w-[10px] items-center justify-center rounded-l bg-[#2d2d2d]">
              <svg aria-hidden="true" width="7" height="10" viewBox="0 0 7 10" fill="none" stroke="#c8c8c8" strokeWidth="1.300"><path d="M5.500.8 1.500 5l4 4.200" /></svg>
            </button>
          </div>
          <div className="mr-[11px] -mt-px"><NavButtons /></div>
        </div>
        <OperatorPanel />
      </div>
    </main>
  );
}

/* ---------- timeline ---------- */

function Timeline() {
  const play = "flex h-[23px] w-6 items-center justify-center bg-[#585858]";
  return (
    <footer className="mt-[3px] flex h-[19px] shrink-0 items-start overflow-hidden rounded-t-lg bg-[#383838] pt-[5px] pr-6">
      <button aria-label="エディタータイプ" className="flex h-[23px] w-[30px] shrink-0 items-center justify-between rounded-tr bg-[#2b2b2b] pr-[3px]">
        <svg aria-hidden="true" width="16" height="20" viewBox="0 0 16 20">
          <circle cx="5.500" cy="10" r="9" fill="#e0e0e0" />
          <path d="M9 4.500 5.500 9.500 9 14" stroke="#222" strokeWidth="2" fill="none" />
        </svg>
        <Chevron />
      </button>
      <div className="ml-2 flex shrink-0 gap-px text-[#dcdcdc]">
        <button className="flex h-[23px] w-[55px] items-center justify-between rounded-tl bg-[#2b2b2b] pr-[3px] pl-2">再生<Chevron /></button>
        <button className="flex h-[23px] w-[95px] items-center justify-between rounded-tr bg-[#2b2b2b] pr-[3px] pl-2">キーイング<Chevron /></button>
      </div>
      <button className="ml-[11px] h-[23px] shrink-0 text-[#dcdcdc]">ビュー</button>
      <button className="ml-[18px] h-[23px] shrink-0 text-[#dcdcdc]">マーカー</button>
      <button aria-label="自動キー挿入" className="ml-[42px] flex h-[23px] w-[23px] shrink-0 items-center justify-center rounded-t bg-[#4c4c4c]">
        <Ico><circle cx="10" cy="11" r="5.500" fill="#d6d6d6" stroke="none" /></Ico>
      </button>
      <div className="ml-2 flex shrink-0 gap-px overflow-hidden rounded-t bg-[#3a3a3a]">
        <button aria-label="先頭へ" className={play}><Ico><path d="M4 4h2.500v12H4zM15 4v12l-7-6z" fill="#e4e4e4" stroke="none" /></Ico></button>
        <button aria-label="前のキーへ" className={play}><Ico><path d="M1 10l5.500-6 5.500 6-5.500 6zM19 4v12l-6-6z" fill="#e4e4e4" stroke="none" /></Ico></button>
        <button aria-label="逆再生" className={play}><Ico><path d="M16 3v14L3 10z" fill="#e4e4e4" stroke="none" /></Ico></button>
        <button aria-label="アニメーション再生" className={play}><Ico><path d="M4 3v14l13-7z" fill="#e4e4e4" stroke="none" /></Ico></button>
        <button aria-label="次のキーへ" className={play}><Ico><path d="M19 10l-5.500-6L8 10l5.500 6zM1 4v12l6-6z" fill="#e4e4e4" stroke="none" /></Ico></button>
        <button aria-label="最後へ" className={play}><Ico><path d="M13.500 4H16v12h-2.500zM5 4v12l7-6z" fill="#e4e4e4" stroke="none" /></Ico></button>
      </div>
      <div className="flex-1" />
      <input aria-label="現在のフレーム" defaultValue="1" className="h-[23px] w-[91px] shrink-0 rounded-t bg-[#585858] text-center text-[#e4e4e4] outline-none" />
      <div className="ml-2 flex h-[23px] shrink-0 gap-px overflow-hidden rounded-t bg-[#444] text-[#e4e4e4]">
        <button aria-label="プレビュー範囲" className="flex w-[23px] items-center justify-center bg-[#4c4c4c]">
          <Ico><circle cx="10" cy="12" r="7" /><path d="M7.500 1.600h5M10 2v3M10 8v4.500h4M2 4l2 2M16 4l2 2" strokeWidth="1.600" /></Ico>
        </button>
        <div className="flex w-[107px] items-center bg-[#585858] pr-5 pl-[18px]">
          <label htmlFor="start" className="shrink-0">開始</label>
          <input id="start" defaultValue="1" className="w-full min-w-0 bg-transparent text-right outline-none" />
        </div>
        <div className="flex w-[107px] items-center bg-[#585858] pr-[18px] pl-[18px]">
          <label htmlFor="end" className="shrink-0">終了</label>
          <input id="end" defaultValue="250" className="w-full min-w-0 bg-transparent text-right outline-none" />
        </div>
      </div>
    </footer>
  );
}

/* ---------- right side ---------- */

function Outliner() {
  const row = "flex h-[25px] shrink-0 items-center pt-[2px] odd:bg-[#282828] even:bg-[#2d2d2d]";
  return (
    <section className="flex h-[299px] shrink-0 flex-col overflow-hidden rounded-l-lg bg-[#282828]">
      <div className="flex h-[31px] shrink-0 items-center bg-[#3b3b3b] pl-[11px]">
        <IconMenu label="アウトライナー">
          <Ico>
            <path d="M1 1.500h7v4H1zM10 8.500h9v4h-9zM10 14.500h9v4h-9z" fill={G} stroke="none" />
            <path d="M4.500 5.500v11H9M4.500 10.500H9" stroke="#999" />
          </Ico>
        </IconMenu>
        <div className="ml-2"><IconMenu label="表示モード"><LayersIcon /></IconMenu></div>
        <label className="ml-[45px] flex h-[23px] min-w-0 flex-1 items-center rounded-l bg-[#1d1d1d] pl-1">
          <Ico><circle cx="12" cy="7.500" r="6" strokeWidth="1.500" /><path d="M7.500 12 1.500 18" strokeWidth="1.800" /></Ico>
          <input aria-label="検索" className="min-w-0 flex-1 bg-transparent outline-none" />
        </label>
      </div>
      <ul className="flex flex-col pt-px text-[#c4c4c4] [text-shadow:none]">
        <li className={row + " gap-[7px] pl-[28px]"}><CollectionIcon />シーンコレクション</li>
        <li className={row + " pl-[33px]"}>
          <svg aria-hidden="true" width="8" height="8" viewBox="0 0 8 8"><path d="M0 0h8L4 8z" fill="#ccc" /></svg>
          <span className="relative ml-[15px] flex size-[13px]">
            <input id="collection" type="checkbox" defaultChecked className="size-[13px] appearance-none rounded-xs bg-[#e4e4e4]" />
            <svg aria-hidden="true" className="pointer-events-none absolute inset-0" width="13" height="13" viewBox="0 0 13 13" fill="none">
              <path d="M2.500 6.500 5.500 9.500l5-6" stroke="#222" strokeWidth="1.800" />
            </svg>
          </span>
          <span className="ml-[6px] flex h-[23px] w-[25px] items-center justify-center rounded-md bg-[#484848]"><CollectionIcon /></span>
          <label htmlFor="collection" className="ml-[5px]">Collection</label>
        </li>
        <li className="flex h-[25px] shrink-0 items-center bg-[#3b5689] pt-[2px] pl-[58px] text-[#f2a235]">
          <svg aria-hidden="true" className="-mt-[10px]" width="17" height="20" viewBox="0 0 17 20" fill="none">
            <path d="M3.500 0v16M8 15.500h9" stroke="#7a7560" />
            <path d="M1 12l8 4-8 4z" fill="#d4d4d4" />
          </svg>
          <span className="flex h-[23px] w-[25px] items-center justify-center rounded-md bg-[#6a7896]">
            <Ico color="#d89263"><path d="M3.500 4h13L10 16.500z" strokeWidth="3" strokeLinejoin="round" /></Ico>
          </span>
          <span className="ml-[5px]">Cube</span>
          <span className="ml-6 flex h-[23px] w-[25px] items-center justify-center rounded-md border border-[#47758a] bg-[#2b6279]"><MeshIcon c="#12c99a" /></span>
        </li>
        {Array.from({ length: 8 }, (_, i) => <li key={i} className={row} />)}
      </ul>
    </section>
  );
}

const B = "#6f9bda";
const R = "#cd6470";

const propertyTabs: { name: string; active?: boolean; icon: React.ReactNode }[][] = [
  [
    {
      name: "ツール",
      icon: (
        <Ico>
          <path d="M4 2v8M1 11h6" />
          <rect x="1" y="12.500" width="6" height="6.500" rx="2" fill="#c8c8c8" stroke="none" />
          <path d="M10 1c-1 4 0 6 2 7v10.500h4V8c3-1 4-3 3-7l-2 4.500h-4.500z" fill="#c8c8c8" stroke="none" />
          <circle cx="14" cy="16.500" r=".9" fill="#2b2b2b" stroke="none" />
        </Ico>
      ),
    },
  ],
  [
    {
      name: "レンダー",
      icon: (
        <Ico>
          <path d="M1 4h4l1-2.500h5L12 4h7v14.500H1z" fill="#c8c8c8" stroke="none" />
          <path d="M3 7.500h10.500v8.500H3zM7 3.500h3V5H7z" fill="#2b2b2b" stroke="none" />
          <path d="M4 9.500h8.500M4 11.800h8.500M4 14h8.500" stroke="#707070" />
          <path d="M15.500 2h3" />
          <circle cx="16.500" cy="9" r="1.200" fill="#2b2b2b" stroke="none" />
          <circle cx="16.500" cy="14.500" r="1.200" fill="#2b2b2b" stroke="none" />
        </Ico>
      ),
    },
    {
      name: "出力",
      icon: (
        <Ico>
          <path d="M1 1h18v9h-2.500V7h-13v3H1z" fill="#c8c8c8" stroke="none" />
          <path d="M4.500 8h11v11h-11z" fill="#8e8e8e" stroke="none" />
          <path d="M6.500 17.500 9.500 12l4 5.500zM12 9.500h2v2h-2z" fill="#2b2b2b" stroke="none" />
        </Ico>
      ),
    },
    { name: "ビューレイヤー", icon: <LayersIcon /> },
    { name: "シーン", icon: <ScenesIcon /> },
    {
      name: "ワールド",
      icon: (
        <Ico color={R}>
          <circle cx="10" cy="10" r="8" />
          <path d="M4 5q3-3 6-2l1 2-2 1 1 2-3 2 1 3-4-3zM10 11h4l2 2-3 4-3-2z" fill={R} />
          <path d="M1 18.500 4 16M16 4l3-2.500" />
        </Ico>
      ),
    },
  ],
  [
    { name: "オブジェクト", icon: <ObjectIcon c="#cc8a55" d="#94623f" /> },
    {
      name: "モディファイアー",
      active: true,
      icon: (
        <Ico>
          <path d="M3 16.800 10 10" stroke="#7eb3ff" strokeWidth="4" strokeLinecap="round" />
          <path d="M13.500 1C9 1 7 5 8.500 9c1 2.500 4 4 7 2.500 2.500-1 3.500-3 3.500-5.500L15.500 9l-3-.5L12 5z" fill="#7eb3ff" stroke="none" />
        </Ico>
      ),
    },
    {
      name: "パーティクル",
      icon: (
        <Ico color="#5577aa">
          <path d="M8 4h8M4 8v8M7 7l9 9" />
          <circle cx="4" cy="4" r="3" fill={B} stroke="none" />
          <circle cx="17" cy="4" r="2" fill="#5577aa" stroke="none" />
          <circle cx="4" cy="17" r="2" fill="#5577aa" stroke="none" />
          <circle cx="16.500" cy="16.500" r="2.600" fill="#5577aa" stroke="none" />
        </Ico>
      ),
    },
    {
      name: "物理演算",
      icon: (
        <Ico color="#5577aa">
          <path d="M12.500 2.200A8.300 8.300 0 1 0 18 14" />
          <circle cx="10" cy="10.500" r="3.800" fill={B} stroke="none" />
          <circle cx="16.500" cy="4" r="2.600" fill="#5577aa" stroke="none" />
        </Ico>
      ),
    },
    {
      name: "コンストレイント",
      icon: (
        <Ico color={B}>
          <path d="M4 6.500 14 1.500c3-1 5 1 4.500 4L14.500 15C12 20 6 20 3 17s-3-8 1-10.500z" />
          <circle cx="8" cy="12" r="3.500" strokeWidth="2.400" />
          <path d="M15.500 3v4M13.500 5h4" />
        </Ico>
      ),
    },
    { name: "オブジェクトデータ", icon: <MeshIcon /> },
    {
      name: "マテリアル",
      icon: (
        <Ico color={R}>
          <circle cx="10" cy="10" r="8.300" />
          <path d="M10 1.500V12.500Q5 12 1.500 9A8.500 8.500 0 0 1 10 1.500zM10 12.500q5 0 8.500-3A8.500 8.500 0 0 1 10 18.500z" fill={R} stroke="none" />
        </Ico>
      ),
    },
  ],
];

function Properties() {
  return (
    <section className="mt-[3px] flex min-h-0 flex-1 flex-col overflow-hidden rounded-tl-lg bg-[#424242]">
      <div className="flex h-[31px] shrink-0 items-center bg-[#383838] pl-[11px] text-[#e0e0e0]">
        <IconMenu label="プロパティエディター">
          <Ico>
            <rect x="1.600" y="2" width="17" height="6" rx="3" />
            <rect x="1.600" y="12" width="17" height="6" rx="3" />
            <path d="M4.500 2H9v6H4.500a3 3 0 0 1 0-6zM4.500 12H13v6H4.500a3 3 0 0 1 0-6z" fill={G} />
          </Ico>
        </IconMenu>
        <span className="mr-[10px] ml-[16px]"><ObjectIcon /></span>
        Cube
      </div>
      <div className="flex min-h-0 flex-1">
        <div role="tablist" aria-orientation="vertical" className="flex w-[35px] shrink-0 flex-col gap-[11px] bg-[#222] pt-[11px] pl-[2px]">
          {propertyTabs.map((group, g) => (
            <div key={g} className="flex flex-col gap-[2px]">
              {group.map((t) => (
                <button
                  key={t.name}
                  role="tab"
                  aria-label={t.name}
                  aria-selected={!!t.active}
                  className={"flex h-[33px] items-center justify-center rounded-l " + (t.active ? "bg-[#424242]" : "bg-[#2b2b2b]")}
                >
                  {t.icon}
                </button>
              ))}
            </div>
          ))}
        </div>
        <div className="min-w-0 flex-1 pt-[11px] pl-[11px]">
          <button className="h-[23px] w-full rounded-l bg-[#2b2b2b] pl-2 text-left text-[#e0e0e0]">モディファイアーを追加</button>
        </div>
      </div>
    </section>
  );
}

export default function App() {
  return (
    <div className="flex h-screen flex-col overflow-hidden bg-[#1f1f1f] font-['DejaVu_Sans','Noto_Sans_CJK_JP',sans-serif] text-[13px] leading-[18px] whitespace-nowrap">
      <TitleBar />
      <div className="flex min-h-0 flex-1 flex-col [text-shadow:0_1px_1px_rgba(0,0,0,0.500)]">
        <TopBar />
        <div className="flex min-h-0 flex-1 gap-[3px]">
          <div className="flex min-w-0 flex-1 flex-col">
            <ToolSettings />
            <Viewport />
            <Timeline />
          </div>
          <aside className="flex w-[241px] shrink-0 flex-col">
            <Outliner />
            <Properties />
          </aside>
        </div>
      </div>
    </div>
  );
}
